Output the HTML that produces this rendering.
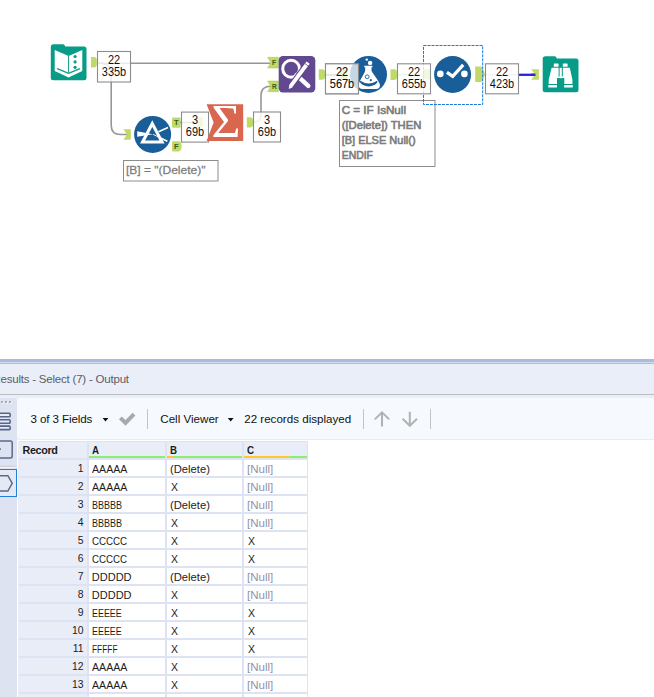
<!DOCTYPE html><html><head><meta charset="utf-8"><title>Results</title><style>
html,body{margin:0;padding:0;background:#fff;}
body{width:654px;height:697px;position:relative;overflow:hidden;font-family:"Liberation Sans",sans-serif;}
#canvas{position:absolute;left:0;top:0;width:654px;height:359px;}
.abs{position:absolute;}
#stripe{left:0;top:359px;width:654px;height:3px;background:#a9bbde;}
#stripe2{left:0;top:362px;width:654px;height:1px;background:#d5dcee;}
#gl1{left:0;top:363px;width:654px;height:1px;background:#b9b9b9;}
#title{left:0;top:364px;width:654px;height:30px;background:#eaeef9;}
#gl2{left:0;top:394px;width:654px;height:1px;background:#bdbdbd;}
#under{left:0;top:395px;width:654px;height:302px;background:#eaeef9;}
#side{left:0;top:398px;width:17px;height:299px;background:#dde3f1;border-top-right-radius:3px;}
#tool{left:17px;top:398px;width:637px;height:41px;background:#f6f9fe;border-top-left-radius:3px;border-bottom-left-radius:4px;border-bottom:1px solid #ececec;}
#gridbg{left:17px;top:440px;width:637px;height:257px;background:#fff;}
#grid{left:18px;top:441px;width:290px;height:256px;background:#dde3f2;border-left:1px solid #e9edf8;box-sizing:border-box;}
.t{position:absolute;white-space:nowrap;line-height:1;}
.cell{position:absolute;height:16px;background:#fff;}
.rc{background:#e9edf8;}
.hd{background:#e9edf8;}
.ct{position:absolute;white-space:nowrap;font-size:11px;line-height:16px;color:#1c1c1c;top:1px;transform-origin:0 50%;display:inline-block;}
.null{color:#9392aa;}
.sep{position:absolute;width:1px;background:#c3c3c3;top:409px;height:20px;}
</style></head><body>
<svg id="canvas" width="654" height="359" viewBox="0 0 654 359" font-family="Liberation Sans, sans-serif">
<path d="M97,63.2 L270.5,63.2" stroke="#969696" stroke-width="1.5" fill="none"/>
<path d="M97,63 Q111.2,63 111.2,72 L111.2,125 Q111.2,134.5 120.5,134.5 L127,134.5" stroke="#969696" stroke-width="1.6" fill="none"/>
<path d="M253,122.3 Q261,122.3 261,114 L261,95 Q261,86.3 271,86.3" stroke="#969696" stroke-width="1.6" fill="none"/>
<path d="M519,74.8 L536,74.8" stroke="#2a22e0" stroke-width="2.3" fill="none"/>
<path d="M53.5,44.2 L63,44.2 Q64.6,44.2 65.2,46.4 L84,46.4 Q86.5,46.4 86.5,48.9 L86.5,77.7 Q86.5,80.2 84,80.2 L53.3,80.2 Q50.8,80.2 50.8,77.7 L50.8,46.9 Q50.8,44.2 53.5,44.2 Z" fill="#079c87"/>
<path d="M54.7,49.9 L68.1,55.7 L68.1,77.2 L54.7,71 Z" fill="#fff"/>
<path d="M69.1,55.7 L82.3,49.9 L82.3,71 L69.1,77.2 Z" fill="#fff"/>
<path d="M67.5,72.6 L69.7,72.6 L69.7,77 L68.6,77.5 L67.5,77 Z" fill="#fff"/>
<path d="M57.1,68.7 L68.6,73.4 L79.9,68.7" stroke="#079c87" stroke-width="1.3" fill="none"/>
<circle cx="75.1" cy="56.5" r="1.6" fill="#079c87"/>
<circle cx="75.1" cy="61.9" r="1.6" fill="#079c87"/>
<circle cx="75.1" cy="67.3" r="1.6" fill="#079c87"/>
<path d="M91,57 L93.8,57 Q96.8,57 96.8,60 L96.8,64.4 Q96.8,67.4 93.8,67.4 L91,67.4 Z" fill="#bfda66"/>
<rect x="97.5" y="51.5" width="33" height="30.5" fill="#fff" fill-opacity="0.8" stroke="#8c8c8c" stroke-width="1.1"/><text transform="translate(114.0,63.75) scale(0.915,1)" x="0" y="0" font-size="12" text-anchor="middle" fill="#111">22</text><text transform="translate(114.0,75.7) scale(0.915,1)" x="0" y="0" font-size="12" text-anchor="middle" fill="#111">335b</text>
<path d="M123.5,129.2 L130.8,129.2 L130.8,139.79999999999998 L123.5,139.79999999999998 L127.0,134.5 Z" fill="#bfda66"/>
<circle cx="152.6" cy="134.4" r="18.5" fill="#1a5e99"/>
<path d="M152.3,123.6 L162,142 L142.6,142 Z" fill="none" stroke="#fff" stroke-width="3.1" stroke-linejoin="miter"/>
<path d="M137.2,131.2 L152.8,134.2 L137.2,136.8 Z" fill="#fff"/>
<path d="M158.5,131.8 L168,127.6" stroke="#fff" stroke-width="1.6"/>
<path d="M153,134.3 L160,137.8" stroke="#fff" stroke-width="0.9"/><path d="M160,137.8 L167.4,141.3" stroke="#fff" stroke-width="1.5"/>
<rect x="172" y="117.6" width="8.6" height="10.2" rx="1.2" fill="#bfda66"/>
<path d="M172,142.5 Q172,141.3 173.2,141.3 L178.5,141.3 Q181.6,141.3 181.6,146.3 Q181.6,151.4 178.5,151.4 L173.2,151.4 Q172,151.4 172,150.2 Z" fill="#bfda66"/>
<text x="176.2" y="125.1" font-size="7.5" font-weight="bold" text-anchor="middle" fill="#2f5d1e">T</text>
<text x="176.2" y="149.2" font-size="7.5" font-weight="bold" text-anchor="middle" fill="#2f5d1e">F</text>
<path d="M180,122.5 L203,122.5" stroke="#969696" stroke-width="1.5"/>
<path d="M196.6,117.2 L203.2,117.2 L203.2,126.8 L196.6,126.8 L199.6,122.0 Z" fill="#bfda66"/>
<rect x="181.5" y="112.1" width="27" height="30" fill="#fff" fill-opacity="0.8" stroke="#8c8c8c" stroke-width="1.1"/><text transform="translate(195.0,123.5) scale(0.915,1)" x="0" y="0" font-size="12" text-anchor="middle" fill="#111">3</text><text transform="translate(195.0,135.7) scale(0.915,1)" x="0" y="0" font-size="12" text-anchor="middle" fill="#111">69b</text>
<rect x="123.5" y="160.5" width="94.5" height="20.5" fill="#fff" stroke="#8c8c8c" stroke-width="1"/>
<text transform="translate(125.9,174.3) scale(1.068,1)" x="0" y="0" font-size="11.25" fill="#7c7c7c" stroke="#7c7c7c" stroke-width="0.25">[B] = "(Delete)"</text>
<path d="M206.6,104.3 L243.2,104.3 L243.2,140.9 L206.6,140.9 L213.6,122.6 Z" fill="#d9674f"/>
<text transform="translate(225.95,137.45) scale(1.07,1.0)" x="0" y="0" font-size="46.5" text-anchor="middle" fill="#fff" font-family="Liberation Serif, serif">Σ</text>
<path d="M246.8,117.2 L250.0,117.2 Q253.0,117.2 253.0,120.2 L253.0,124.60000000000001 Q253.0,127.60000000000001 250.0,127.60000000000001 L246.8,127.60000000000001 Z" fill="#bfda66"/>
<rect x="253.5" y="112.0" width="27" height="30" fill="#fff" fill-opacity="0.85" stroke="#8c8c8c" stroke-width="1.1"/><text transform="translate(267.0,123.5) scale(0.915,1)" x="0" y="0" font-size="12" text-anchor="middle" fill="#111">3</text><text transform="translate(267.0,135.7) scale(0.915,1)" x="0" y="0" font-size="12" text-anchor="middle" fill="#111">69b</text>
<path d="M267.6,57.3 L278.40000000000003,57.3 L278.40000000000003,68.0 L267.6,68.0 L270.8,62.65 Z" fill="#bfda66" stroke="#a8c64c" stroke-width="0.5"/>
<path d="M267.6,81.0 L278.40000000000003,81.0 L278.40000000000003,91.7 L267.6,91.7 L270.8,86.35 Z" fill="#bfda66" stroke="#a8c64c" stroke-width="0.5"/>
<text x="274.1" y="64.8" font-size="6.6" font-weight="bold" text-anchor="middle" fill="#2f5d1e">F</text>
<text x="274.3" y="88.6" font-size="6.6" font-weight="bold" text-anchor="middle" fill="#2f5d1e">R</text>
<rect x="278.7" y="56.1" width="36.6" height="36.4" rx="4.2" fill="#614891"/>
<path d="M296.5,75.2 L308.3,85.8" stroke="#fff" stroke-width="4.5" stroke-linecap="round"/>
<circle cx="291.1" cy="68.75" r="8.4" fill="none" stroke="#fff" stroke-width="3"/>
<path d="M289.4,88 L308.1,62.7" stroke="#614891" stroke-width="6.2"/>
<path d="M290.5,86.4 L308.1,62.7" stroke="#fff" stroke-width="3.9"/>
<path d="M288.7,88.9 L289.3,85.2 L292.4,87.5 Z" fill="#fff"/>
<path d="M304.9,63.6 L308.8,66.4" stroke="#614891" stroke-width="0.8"/>
<path d="M318.8,69.3 L322.0,69.3 Q325.0,69.3 325.0,72.3 L325.0,76.7 Q325.0,79.7 322.0,79.7 L318.8,79.7 Z" fill="#bfda66"/>
<rect x="325.5" y="63.8" width="33" height="30" fill="#fff" fill-opacity="1" stroke="#8c8c8c" stroke-width="1.1"/><text transform="translate(342.0,75.75) scale(0.915,1)" x="0" y="0" font-size="12" text-anchor="middle" fill="#111">22</text><text transform="translate(342.0,87.7) scale(0.915,1)" x="0" y="0" font-size="12" text-anchor="middle" fill="#111">567b</text>
<circle cx="368.5" cy="74.4" r="18.5" fill="#1a5e99"/>
<path d="M364.3,65.7 H372.4 V67.2 H371.5 V70.8 C373.5,75 380,82 380,85.2 C380,87.6 378.5,89 376.3,89 H362.3 C360.1,89 358.6,87.6 358.6,85.2 C358.6,82 363.8,75 365.2,70.8 V67.2 H364.3 Z" fill="#fff"/>
<path d="M360,81 Q360.6,80.6 361.2,81.2 Q368.6,85.6 376.2,81.2 Q376.8,80.6 377.4,81 Q377.8,81.6 377.2,82.6 Q374.5,86.4 368.6,86.4 Q362.8,86.4 360.2,82.6 Q359.6,81.6 360,81 Z" fill="#1a5e99"/>
<circle cx="370.1" cy="62.9" r="2.2" fill="#fff"/>
<circle cx="366.8" cy="59.6" r="1.2" fill="#fff"/>
<circle cx="367.2" cy="76.8" r="1.9" fill="none" stroke="#1a5e99" stroke-width="0.9"/>
<circle cx="370.8" cy="80.2" r="1.1" fill="#1a5e99"/>
<rect x="325.5" y="63.8" width="33" height="30" fill="#fff" fill-opacity="0.75" stroke="none"/>
<path d="M325,74.9 L341,74.9" stroke="#dcdcdc" stroke-width="1.4"/>
<rect x="340.8" y="68.8" width="6.2" height="10.2" fill="#bfda66" fill-opacity="0.3"/>
<rect x="325.5" y="63.8" width="33" height="30" fill="none" stroke="#8c8c8c" stroke-width="1.1"/>
<text transform="translate(342,75.75) scale(0.915,1)" x="0" y="0" font-size="12" text-anchor="middle" fill="#111">22</text><text transform="translate(342,87.7) scale(0.915,1)" x="0" y="0" font-size="12" text-anchor="middle" fill="#111">567b</text>
<path d="M390.5,69.3 L394.0,69.3 Q397.0,69.3 397.0,72.3 L397.0,76.89999999999999 Q397.0,79.89999999999999 394.0,79.89999999999999 L390.5,79.89999999999999 Z" fill="#bfda66"/>
<rect x="339.5" y="100.5" width="95.5" height="66" fill="#fff" stroke="#8c8c8c" stroke-width="1"/>
<text x="341.7" y="113.8" font-size="11.2" textLength="64.3" lengthAdjust="spacingAndGlyphs" fill="#7b7b7b" stroke="#7b7b7b" stroke-width="0.6">C = IF IsNull</text>
<text x="341.7" y="128.8" font-size="11.2" textLength="79.6" lengthAdjust="spacingAndGlyphs" fill="#7b7b7b" stroke="#7b7b7b" stroke-width="0.6">([Delete]) THEN</text>
<text x="341.7" y="143.8" font-size="11.2" textLength="73.9" lengthAdjust="spacingAndGlyphs" fill="#7b7b7b" stroke="#7b7b7b" stroke-width="0.6">[B] ELSE Null()</text>
<text x="341.7" y="158.8" font-size="11.2" textLength="31.3" lengthAdjust="spacingAndGlyphs" fill="#7b7b7b" stroke="#7b7b7b" stroke-width="0.6">ENDIF</text>
<path d="M423,69.2 L431,69.2 L431,79.4 L423,79.4 Z" fill="#bfda66"/>
<path d="M397,74.6 L428,74.6" stroke="#9fd0a0" stroke-width="1.4"/>
<circle cx="452.6" cy="74.5" r="18.5" fill="#1a5e99"/>
<circle cx="440.3" cy="73.9" r="3.3" fill="#fff"/><circle cx="464.4" cy="73.9" r="3.3" fill="#fff"/>
<path d="M446.9,72.3 L452.7,76.3 L463.2,64.8" fill="none" stroke="#fff" stroke-width="3.3"/>
<path d="M475.2,66.6 L481.5,66.6 L485.2,74.4 L481.5,82.1 L475.2,82.1 Z" fill="#bfda66"/>
<rect x="423.5" y="45.5" width="59.2" height="59" fill="none" stroke="#1a78d8" stroke-width="1" stroke-dasharray="3,1"/>
<rect x="397.5" y="63.8" width="33" height="30" fill="#fff" fill-opacity="0.8" stroke="#8c8c8c" stroke-width="1.1"/><text transform="translate(414.0,75.75) scale(0.915,1)" x="0" y="0" font-size="12" text-anchor="middle" fill="#111">22</text><text transform="translate(414.0,87.7) scale(0.915,1)" x="0" y="0" font-size="12" text-anchor="middle" fill="#111">655b</text>
<path d="M485,74.8 L519,74.8" stroke="#c9c7f5" stroke-width="1.6"/>
<rect x="485.5" y="63.8" width="33" height="30" fill="#fff" fill-opacity="0.8" stroke="#8c8c8c" stroke-width="1.1"/><text transform="translate(502.0,75.75) scale(0.915,1)" x="0" y="0" font-size="12" text-anchor="middle" fill="#111">22</text><text transform="translate(502.0,87.7) scale(0.915,1)" x="0" y="0" font-size="12" text-anchor="middle" fill="#111">423b</text>
<path d="M531.3,69.2 L538.9,69.2 L538.9,79.8 L531.3,79.8 L534.9,74.5 Z" fill="#bfda66"/>
<path d="M531,74.8 L535.5,74.8" stroke="#2a22e0" stroke-width="2.3"/>
<path d="M545.4,56.3 L554.6,56.3 Q556.2,56.3 556.8,58.6 L576,58.6 Q578.5,58.6 578.5,61.1 L578.5,89.7 Q578.5,92.2 576,92.2 L545.2,92.2 Q542.7,92.2 542.7,89.7 L542.7,59 Q542.7,56.3 545.4,56.3 Z" fill="#079c87"/>
<rect x="553.8" y="63.6" width="4.8" height="3.2" rx="0.4" fill="#fff"/><rect x="562.8" y="63.6" width="4.8" height="3.2" rx="0.4" fill="#fff"/>
<path d="M551.6,67.8 L558.6,67.8 L558.6,78.1 L557,78.1 L557,83.9 L548.7,83.9 L548.7,79.7 Z" fill="#fff"/>
<path d="M562.8,67.8 L569.8,67.8 L572.4,79.7 L572.4,83.9 L564.3,83.9 L564.3,78.1 L562.8,78.1 Z" fill="#fff"/>
<rect x="559.6" y="67.8" width="2.2" height="10.3" fill="#fff"/><rect x="558.4" y="76.5" width="4.6" height="1.6" fill="#fff"/>
<rect x="548.3" y="85.1" width="8.7" height="2.3" rx="0.5" fill="#fff"/><rect x="564.1" y="85.1" width="8.7" height="2.3" rx="0.5" fill="#fff"/>
</svg>
<div class="abs" id="stripe"></div><div class="abs" id="stripe2"></div><div class="abs" id="gl1"></div><div class="abs" id="title"></div><div class="abs" id="gl2"></div><div class="abs" id="under"></div>
<div class="t" id="ttl" style="left:-7.6px;top:374px;font-size:11.5px;letter-spacing:-0.21px;color:#5c5c66;">Results - Select (7) - Output</div>
<div class="abs" id="side"></div><div class="abs" id="tool"></div><div class="abs" id="gridbg"></div><div class="abs" id="grid"></div>
<svg class="abs" style="left:0;top:398px" width="18" height="110" viewBox="0 0 18 110">
<g fill="#ffffff"><rect x="1.8" y="3.7" width="1.8" height="1.9"/><rect x="5.7" y="3.7" width="1.9" height="1.9"/><rect x="9.7" y="3.7" width="1.9" height="1.9"/></g>
<g fill="#a3a3a3"><rect x="1.1" y="3" width="1.8" height="1.9"/><rect x="5" y="3" width="1.9" height="1.9"/><rect x="9" y="3" width="1.9" height="1.9"/></g>
<g fill="#e6eaf4" stroke="#55658b" stroke-width="1.6"><rect x="-3" y="15.2" width="13.1" height="3.5" rx="0.8"/><rect x="-3" y="21.8" width="13.1" height="3.5" rx="0.8"/><rect x="-3" y="28.1" width="13.1" height="3.5" rx="0.8"/></g>
<rect x="-3" y="42.9" width="15.2" height="17" rx="1.8" fill="none" stroke="#5a6a8c" stroke-width="1.5"/>
<rect x="0" y="50.3" width="0.9" height="1.6" fill="#5a6a8c"/>
<rect x="0" y="67.8" width="15" height="1" fill="#c4c4c4"/><rect x="0" y="68.8" width="15" height="1" fill="#f3f5fa"/>
<rect x="-2" y="71.5" width="18.5" height="27" fill="#e4e9f4" stroke="#1f7fd9" stroke-width="1"/>
<path d="M-2,77.7 L7.9,77.7 L12.2,85.3 L7.9,93 L-2,93" fill="none" stroke="#5a6a8c" stroke-width="1.5"/>
</svg>
<div class="t" id="f1" style="left:30.6px;top:413px;font-size:11.6px;letter-spacing:-0.12px;color:#111;">3 of 3 Fields</div>
<svg class="abs" style="left:102px;top:417px" width="8" height="6"><path d="M0.6,0.9 L6.4,0.9 L3.5,4.4 Z" fill="#111"/></svg>
<svg class="abs" style="left:117px;top:411px" width="22" height="18"><path d="M3.4,6.9 L8.5,11.9 L17,3.2" fill="none" stroke="#a9a9a9" stroke-width="4"/></svg>
<div class="sep" style="left:147px"></div>
<div class="t" id="f2" style="left:160.3px;top:413px;font-size:11.6px;color:#111;">Cell Viewer</div>
<svg class="abs" style="left:227px;top:417px" width="8" height="6"><path d="M0.8,0.9 L6.6,0.9 L3.7,4.4 Z" fill="#111"/></svg>
<div class="t" id="f3" style="left:244.2px;top:413px;font-size:11.6px;color:#111;">22 records displayed</div>
<div class="sep" style="left:363px"></div>
<svg class="abs" style="left:372px;top:409px" width="50" height="20"><g fill="none" stroke="#b2b2b2" stroke-width="2"><path d="M10,17.4 L10,3.6 M2.8,10.4 L10,3.4 L17.2,10.4"/><path d="M37.8,2.8 L37.8,16.6 M30.6,9.8 L37.8,16.8 L45,9.8"/></g></svg>
<div class="sep" style="left:430px"></div>
<div class="cell hd" style="left:19px;top:442px;width:68px"><span class="ct" style="left:3.5px;font-weight:bold;font-size:10.8px;letter-spacing:-0.35px;line-height:17px;top:0;">Record</span></div>
<div class="cell hd" style="left:89px;top:442px;width:76px"><span class="ct" style="left:3.0px;transform:scaleX(0.9);font-weight:bold;font-size:10.8px;letter-spacing:-0.35px;line-height:17px;top:0;">A</span></div>
<div class="cell hd" style="left:167px;top:442px;width:75px"><span class="ct" style="left:3.0px;transform:scaleX(0.9);font-weight:bold;font-size:10.8px;letter-spacing:-0.35px;line-height:17px;top:0;">B</span></div>
<div class="cell hd" style="left:244px;top:442px;width:63px"><span class="ct" style="left:3.0px;transform:scaleX(0.9);font-weight:bold;font-size:10.8px;letter-spacing:-0.35px;line-height:17px;top:0;">C</span></div>
<div class="abs" style="left:89px;top:456px;width:76px;height:2px;background:#8cee6c"></div>
<div class="abs" style="left:167px;top:456px;width:75px;height:2px;background:#8cee6c"></div><div class="abs" style="left:167px;top:456px;width:6px;height:2px;background:#ffc82e"></div>
<div class="abs" style="left:244px;top:456px;width:63px;height:2px;background:#8cee6c"></div><div class="abs" style="left:244px;top:456px;width:46px;height:2px;background:#ffc82e"></div>
<div class="cell rc" style="left:19px;top:460px;width:68px"><span class="ct" style="right:3.4px;font-size:10.4px;letter-spacing:0;top:1px">1</span></div>
<div class="cell " style="left:89px;top:460px;width:76px"><span class="ct" style="left:3.2px;transform:scaleX(0.965)">AAAAA</span></div>
<div class="cell " style="left:167px;top:460px;width:75px"><span class="ct" style="left:2.8px;transform:scaleX(1.02)">(Delete)</span></div>
<div class="cell " style="left:244px;top:460px;width:63px"><span class="ct null" style="left:3.0px;transform:scaleX(1.05)">[Null]</span></div>
<div class="cell rc" style="left:19px;top:478px;width:68px"><span class="ct" style="right:3.4px;font-size:10.4px;letter-spacing:0;top:1px">2</span></div>
<div class="cell " style="left:89px;top:478px;width:76px"><span class="ct" style="left:3.2px;transform:scaleX(0.965)">AAAAA</span></div>
<div class="cell " style="left:167px;top:478px;width:75px"><span class="ct" style="left:3.6px;transform:scaleX(0.95)">X</span></div>
<div class="cell " style="left:244px;top:478px;width:63px"><span class="ct null" style="left:3.0px;transform:scaleX(1.05)">[Null]</span></div>
<div class="cell rc" style="left:19px;top:496px;width:68px"><span class="ct" style="right:3.4px;font-size:10.4px;letter-spacing:0;top:1px">3</span></div>
<div class="cell " style="left:89px;top:496px;width:76px"><span class="ct" style="left:2.9px;transform:scaleX(0.82)">BBBBB</span></div>
<div class="cell " style="left:167px;top:496px;width:75px"><span class="ct" style="left:2.8px;transform:scaleX(1.02)">(Delete)</span></div>
<div class="cell " style="left:244px;top:496px;width:63px"><span class="ct null" style="left:3.0px;transform:scaleX(1.05)">[Null]</span></div>
<div class="cell rc" style="left:19px;top:514px;width:68px"><span class="ct" style="right:3.4px;font-size:10.4px;letter-spacing:0;top:1px">4</span></div>
<div class="cell " style="left:89px;top:514px;width:76px"><span class="ct" style="left:2.9px;transform:scaleX(0.82)">BBBBB</span></div>
<div class="cell " style="left:167px;top:514px;width:75px"><span class="ct" style="left:3.6px;transform:scaleX(0.95)">X</span></div>
<div class="cell " style="left:244px;top:514px;width:63px"><span class="ct null" style="left:3.0px;transform:scaleX(1.05)">[Null]</span></div>
<div class="cell rc" style="left:19px;top:532px;width:68px"><span class="ct" style="right:3.4px;font-size:10.4px;letter-spacing:0;top:1px">5</span></div>
<div class="cell " style="left:89px;top:532px;width:76px"><span class="ct" style="left:2.9px;transform:scaleX(0.885)">CCCCC</span></div>
<div class="cell " style="left:167px;top:532px;width:75px"><span class="ct" style="left:3.6px;transform:scaleX(0.95)">X</span></div>
<div class="cell " style="left:244px;top:532px;width:63px"><span class="ct" style="left:3.6px;transform:scaleX(0.95)">X</span></div>
<div class="cell rc" style="left:19px;top:550px;width:68px"><span class="ct" style="right:3.4px;font-size:10.4px;letter-spacing:0;top:1px">6</span></div>
<div class="cell " style="left:89px;top:550px;width:76px"><span class="ct" style="left:2.9px;transform:scaleX(0.885)">CCCCC</span></div>
<div class="cell " style="left:167px;top:550px;width:75px"><span class="ct" style="left:3.6px;transform:scaleX(0.95)">X</span></div>
<div class="cell " style="left:244px;top:550px;width:63px"><span class="ct" style="left:3.6px;transform:scaleX(0.95)">X</span></div>
<div class="cell rc" style="left:19px;top:568px;width:68px"><span class="ct" style="right:3.4px;font-size:10.4px;letter-spacing:0;top:1px">7</span></div>
<div class="cell " style="left:89px;top:568px;width:76px"><span class="ct" style="left:2.8px;transform:scaleX(1.0)">DDDDD</span></div>
<div class="cell " style="left:167px;top:568px;width:75px"><span class="ct" style="left:2.8px;transform:scaleX(1.02)">(Delete)</span></div>
<div class="cell " style="left:244px;top:568px;width:63px"><span class="ct null" style="left:3.0px;transform:scaleX(1.05)">[Null]</span></div>
<div class="cell rc" style="left:19px;top:586px;width:68px"><span class="ct" style="right:3.4px;font-size:10.4px;letter-spacing:0;top:1px">8</span></div>
<div class="cell " style="left:89px;top:586px;width:76px"><span class="ct" style="left:2.8px;transform:scaleX(1.0)">DDDDD</span></div>
<div class="cell " style="left:167px;top:586px;width:75px"><span class="ct" style="left:3.6px;transform:scaleX(0.95)">X</span></div>
<div class="cell " style="left:244px;top:586px;width:63px"><span class="ct null" style="left:3.0px;transform:scaleX(1.05)">[Null]</span></div>
<div class="cell rc" style="left:19px;top:604px;width:68px"><span class="ct" style="right:3.4px;font-size:10.4px;letter-spacing:0;top:1px">9</span></div>
<div class="cell " style="left:89px;top:604px;width:76px"><span class="ct" style="left:2.9px;transform:scaleX(0.81)">EEEEE</span></div>
<div class="cell " style="left:167px;top:604px;width:75px"><span class="ct" style="left:3.6px;transform:scaleX(0.95)">X</span></div>
<div class="cell " style="left:244px;top:604px;width:63px"><span class="ct" style="left:3.6px;transform:scaleX(0.95)">X</span></div>
<div class="cell rc" style="left:19px;top:622px;width:68px"><span class="ct" style="right:3.4px;font-size:10.4px;letter-spacing:0;top:1px">10</span></div>
<div class="cell " style="left:89px;top:622px;width:76px"><span class="ct" style="left:2.9px;transform:scaleX(0.81)">EEEEE</span></div>
<div class="cell " style="left:167px;top:622px;width:75px"><span class="ct" style="left:3.6px;transform:scaleX(0.95)">X</span></div>
<div class="cell " style="left:244px;top:622px;width:63px"><span class="ct" style="left:3.6px;transform:scaleX(0.95)">X</span></div>
<div class="cell rc" style="left:19px;top:640px;width:68px"><span class="ct" style="right:3.4px;font-size:10.4px;letter-spacing:0;top:1px">11</span></div>
<div class="cell " style="left:89px;top:640px;width:76px"><span class="ct" style="left:2.9px;transform:scaleX(0.76)">FFFFF</span></div>
<div class="cell " style="left:167px;top:640px;width:75px"><span class="ct" style="left:3.6px;transform:scaleX(0.95)">X</span></div>
<div class="cell " style="left:244px;top:640px;width:63px"><span class="ct" style="left:3.6px;transform:scaleX(0.95)">X</span></div>
<div class="cell rc" style="left:19px;top:658px;width:68px"><span class="ct" style="right:3.4px;font-size:10.4px;letter-spacing:0;top:1px">12</span></div>
<div class="cell " style="left:89px;top:658px;width:76px"><span class="ct" style="left:3.2px;transform:scaleX(0.965)">AAAAA</span></div>
<div class="cell " style="left:167px;top:658px;width:75px"><span class="ct" style="left:3.6px;transform:scaleX(0.95)">X</span></div>
<div class="cell " style="left:244px;top:658px;width:63px"><span class="ct null" style="left:3.0px;transform:scaleX(1.05)">[Null]</span></div>
<div class="cell rc" style="left:19px;top:676px;width:68px"><span class="ct" style="right:3.4px;font-size:10.4px;letter-spacing:0;top:1px">13</span></div>
<div class="cell " style="left:89px;top:676px;width:76px"><span class="ct" style="left:3.2px;transform:scaleX(0.965)">AAAAA</span></div>
<div class="cell " style="left:167px;top:676px;width:75px"><span class="ct" style="left:3.6px;transform:scaleX(0.95)">X</span></div>
<div class="cell " style="left:244px;top:676px;width:63px"><span class="ct null" style="left:3.0px;transform:scaleX(1.05)">[Null]</span></div>
<div class="cell rc" style="left:19px;top:694px;width:68px"><span class="ct" style="right:3.4px;font-size:10.4px;letter-spacing:0;top:1px"></span></div>
<div class="cell " style="left:89px;top:694px;width:76px"><span class="ct" style="left:3.4px;transform:scaleX(1.0)"></span></div>
<div class="cell " style="left:167px;top:694px;width:75px"><span class="ct" style="left:3.4px;transform:scaleX(1.0)"></span></div>
<div class="cell " style="left:244px;top:694px;width:63px"><span class="ct" style="left:3.4px;transform:scaleX(1.0)"></span></div>
</body></html>
